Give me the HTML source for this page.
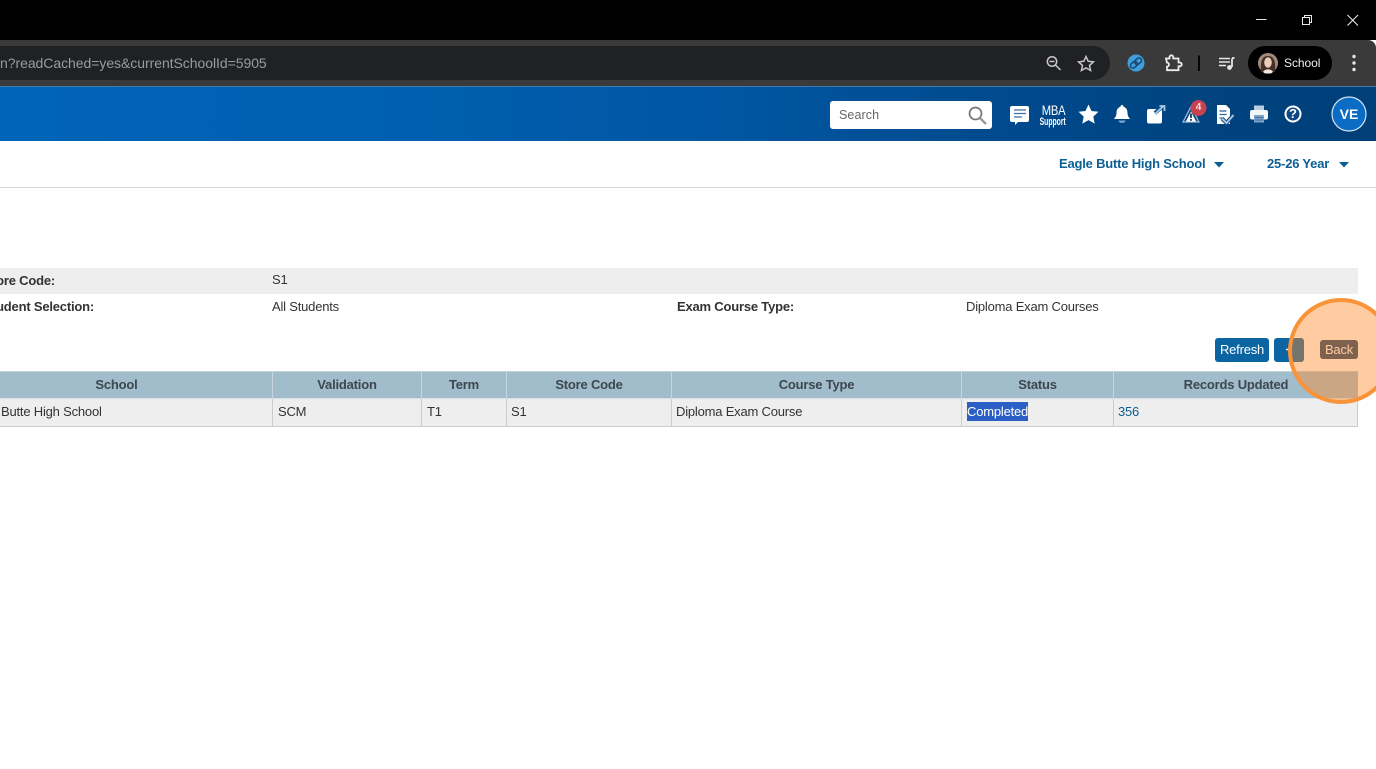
<!DOCTYPE html>
<html lang="en"><head><meta charset="utf-8"><title>Exam Validation</title>
<style>
html,body{margin:0;padding:0;background:#fff}
body{width:1376px;height:769px;position:relative;overflow:hidden;font-family:"Liberation Sans",Arial,sans-serif;font-size:13px;letter-spacing:-.2px;color:#333}
.a{position:absolute;white-space:nowrap}
svg{position:absolute;overflow:visible}
.th{position:absolute;top:372px;height:26px;line-height:25px;text-align:center;font-weight:bold;color:#3c4750;border-right:1px solid #c8d6de;box-sizing:border-box}
.td{position:absolute;top:399px;height:27px;line-height:25px;padding-left:5px;box-sizing:border-box;color:#333;border-right:1px solid #ccc;white-space:nowrap}
</style></head><body>

<div class="a" style="left:0;top:0;width:1376px;height:40px;background:#000"></div>
<div class="a" style="left:0;top:40px;width:1376px;height:46px;background:#3a3a3b;border-top-right-radius:8px"></div>
<div class="a" style="left:0;top:46px;width:1110px;height:34px;background:#202124;border-radius:0 17px 17px 0"></div>
<div class="a" style="left:0;top:54px;font-size:14px;line-height:18px;color:#9a9b9e;letter-spacing:-.05px">n?readCached=yes&amp;currentSchoolId=5905</div>

<!-- window controls -->
<svg style="left:0;top:0" width="1376" height="40" fill="none" stroke="#e8e8e8" stroke-width="1">
<path d="M1256 19.5h10.5"/>
<rect x="1302.5" y="17.5" width="7" height="7"/>
<path d="M1304.5 17.5v-2h7v7h-2"/>
<path d="M1347.5 15l10.5 10.5M1358 15l-10.5 10.5" stroke-width="1.1"/>
</svg>

<!-- toolbar icons -->
<svg style="left:0;top:40px" width="1376" height="46" fill="none" stroke="#c7c7c7">
<circle cx="1052" cy="21.5" r="4.7" stroke-width="1.5"/><path d="M1055.5 25l5 5M1049.5 21.5h5" stroke-width="1.5"/>
<path d="M1086 16.5l2.2 4.8 5.2.6-3.9 3.5 1.1 5.1-4.6-2.6-4.6 2.6 1.100-5.100-3.900-3.500 5.200-.6z" stroke-width="1.5"/>
<circle cx="1136" cy="23" r="8.500" fill="#3f9fdc" stroke="none"/>
<g transform="rotate(-40 1136 23)" stroke="#17476f" stroke-width="1.500"><rect x="1129.500" y="20.500" width="7.500" height="5" rx="2.500"/><rect x="1135" y="20.500" width="7.500" height="5" rx="2.500"/></g>
<path d="M1166 18.500h3.500v-1.300a1.900 1.900 0 0 1 3.800 0v1.300h5.200v4h1.300a1.900 1.900 0 0 1 0 3.800h-1.300v3.900h-11.500v-3.600a2 2 0 0 0 0-4z" stroke="#ececec" stroke-width="1.800"/>
<path d="M1199 15.500v15.500" stroke="#050505" stroke-width="2"/>
<path d="M1219 18.500h11M1219 22h11M1219 25.500h7" stroke="#e6e6e6" stroke-width="1.500"/>
<path d="M1232 18.500v8.500" stroke="#e6e6e6" stroke-width="1.800"/><path d="M1232 18h2.500" stroke="#e6e6e6" stroke-width="1.800"/>
<circle cx="1229.500" cy="27.500" r="2.400" fill="#e6e6e6" stroke="none"/>
<rect x="1248" y="6" width="84" height="34" rx="17" fill="#000" stroke="none"/>
<circle cx="1268" cy="23" r="10" fill="#a08a7b" stroke="none"/>
<path d="M1261 32c-.5-9 0-16 7-16s7.500 7 7 16l-3 0-8 0z" fill="#43302a" stroke="none"/>
<ellipse cx="1268" cy="22.500" rx="3.800" ry="5.200" fill="#edcdb8" stroke="none"/>
<path d="M1263 32c2-3.500 8-3.500 10 0l-2 1.500h-6z" fill="#f3e7de" stroke="none"/>
<circle cx="1354" cy="16.500" r="1.700" fill="#e6e6e6" stroke="none"/><circle cx="1354" cy="23" r="1.700" fill="#e6e6e6" stroke="none"/><circle cx="1354" cy="29.500" r="1.700" fill="#e6e6e6" stroke="none"/>
</svg>
<div class="a" style="left:1284px;top:54px;font-size:12px;letter-spacing:-.05px;line-height:18px;color:#f0f0f0">School</div>

<!-- blue header -->
<div class="a" style="left:0;top:86px;width:1376px;height:55px;background:linear-gradient(90deg,#0064b8 0%,#005fb0 30%,#0055a0 55%,#004a8e 72%,#00437f 88%,#003f78 100%);border-top:1px solid #3f7cab;box-sizing:border-box"></div>
<div class="a" style="left:830px;top:101px;width:162px;height:28px;background:#fff;border-radius:3px"></div>
<div class="a" style="left:839px;top:107px;font-size:12.500px;letter-spacing:.1px;line-height:17px;color:#666">Search</div>
<svg style="left:0;top:0" width="1376" height="141" fill="none">
<circle cx="975.500" cy="113.500" r="6" stroke="#777" stroke-width="1.700"/><path d="M980 118l6 6" stroke="#999" stroke-width="2.400"/>
<path d="M1012 106h15a2 2 0 0 1 2 2v12a2 2 0 0 1-2 2h-9l-3 3v-3h-3a2 2 0 0 1-2-2v-12a2 2 0 0 1 2-2z" fill="#fff"/>
<path d="M1014 110h12M1014 113.500h12M1014 117h8" stroke="#3c6fa6" stroke-width="1.300"/>
<path d="M1088.500 104.500l3 6.500 7 .8-5.200 4.800 1.400 7-6.200-3.500-6.200 3.500 1.400-7-5.200-4.800 7-.8z" fill="#fff"/>
<path d="M1122 105a1.500 1.500 0 0 1 1.500 1.700c3 1 4 3.300 4 6.300 0 3 1.500 4.500 2.500 6h-16c1-1.500 2.500-3 2.500-6 0-3 1-5.300 4-6.300A1.500 1.500 0 0 1 1122 105z" fill="#fff"/>
<path d="M1118.500 120.500h7a3.500 2.500 0 0 1-7 0z" fill="#7da3cc"/>
<rect x="1147" y="109" width="15" height="14.500" rx="2" fill="#fff"/>
<path d="M1155 113l8-7" stroke="#0e4f8f" stroke-width="4"/><path d="M1155 114l8-7.500M1159.500 106h5v5" stroke="#a9c8e4" stroke-width="1.800"/>
<path d="M1191 106.500l8 15.500h-16z" stroke="#9fc0dc" stroke-width="1.200" fill="#0d4783"/>
<path d="M1191 111.500l5.200 10h-10.400z" fill="#fff"/>
<path d="M1191 113.500v4.500M1191 119v1.800" stroke="#0d3f75" stroke-width="1.800"/>
<circle cx="1198.500" cy="108" r="8" fill="#c8414f"/>
<path d="M1217 105h9l4 4v15h-13z" fill="#fff"/>
<path d="M1219.500 111h7M1219.500 114.500h7M1219.500 118h4" stroke="#2c6296" stroke-width="1.300"/>
<path d="M1222 118.500l4.500 4.500 7-8" stroke="#0d4783" stroke-width="4"/>
<path d="M1222 118.500l4.500 4.500 7-8" stroke="#a9c4de" stroke-width="2"/>
<path d="M1254 105.500h10v5h-10z" fill="#b9cde0"/>
<rect x="1250" y="110" width="18" height="9.500" rx="2" fill="#f4f7fa"/>
<rect x="1254" y="115" width="10" height="7.500" fill="#7fa3c7"/>
<path d="M1255 117.500h8M1255 120h8" stroke="#2c6296" stroke-width=".8"/>
<circle cx="1293" cy="114" r="7.500" stroke="#fff" stroke-width="2" fill="#0d4783"/>
<circle cx="1349" cy="114" r="17" fill="#0a6cc4" stroke="#d7e6f3" stroke-width="1.200"/>
</svg>
<div class="a" style="left:1039px;top:103px;width:27px;text-align:center;font-size:14px;line-height:14px;color:#fff;transform:scaleX(.8);letter-spacing:-.2px">MBA</div>
<div class="a" style="left:1032px;top:116px;width:40px;text-align:center;font-size:11px;letter-spacing:0;line-height:12px;font-weight:bold;color:#fff;transform:scaleX(.62)">Support</div>
<div class="a" style="left:1193px;top:102px;width:11px;text-align:center;font-size:10px;letter-spacing:0;line-height:12px;font-weight:bold;color:#f4dfe1">4</div>
<div class="a" style="left:1287px;top:106px;width:12px;text-align:center;font-size:13px;letter-spacing:0;line-height:16px;font-weight:bold;color:#fff">?</div>
<div class="a" style="left:1332px;top:105px;width:34px;text-align:center;font-size:14px;letter-spacing:0;line-height:18px;font-weight:bold;color:#fff">VE</div>

<!-- sub header -->
<div class="a" style="left:0;top:187px;width:1376px;height:1px;background:#d8d8d8"></div>
<div class="a" style="left:1059px;top:155px;font-size:13px;letter-spacing:-.2px;line-height:17px;font-weight:bold;color:#0b5f95">Eagle Butte High School</div>
<div class="a" style="left:1267px;top:155px;font-size:13px;letter-spacing:-.2px;line-height:17px;font-weight:bold;color:#0b5f95">25-26 Year</div>
<svg style="left:0;top:0" width="1376" height="190"><path d="M1214 162h10l-5 5.500zM1339 162h10l-5 5.500z" fill="#0b5f95"/></svg>

<!-- info rows -->
<div class="a" style="left:0;top:268px;width:1358px;height:26px;background:#eee"></div>
<div class="a" style="right:1321px;top:272px;line-height:17px;font-weight:bold;color:#333">Store Code:</div>
<div class="a" style="left:272px;top:271px;line-height:17px">S1</div>
<div class="a" style="right:1282px;top:298px;line-height:17px;font-weight:bold;color:#333">Student Selection:</div>
<div class="a" style="left:272px;top:298px;line-height:17px">All Students</div>
<div class="a" style="left:677px;top:298px;line-height:17px;font-weight:bold">Exam Course Type:</div>
<div class="a" style="left:966px;top:298px;line-height:17px">Diploma Exam Courses</div>

<!-- buttons -->
<div class="a" style="left:1215px;top:338px;width:54px;height:24px;background:#0b65a3;border-radius:3px;color:#fff;text-align:center;line-height:23px">Refresh</div>
<div class="a" style="left:1274px;top:338px;width:30px;height:24px;background:#0b65a3;border-radius:3px;color:#fff;text-align:center;line-height:23px"></div>
<svg style="left:0;top:0" width="1376" height="400"><path d="M1286 349.500h3.500" stroke="#fff" stroke-width="1.500"/></svg>
<div class="a" style="left:1320px;top:340px;width:38px;height:19px;background:#1a406d;border-radius:3px;color:#fff;text-align:center;line-height:19px">Back</div>

<!-- table -->
<div class="a" style="left:0;top:371px;width:1358px;height:56px;background:#eee;border-top:1px solid #c5d2da;border-bottom:1px solid #ccc;box-sizing:border-box"></div>
<div class="a" style="left:0;top:372px;width:1358px;height:26px;background:#a1bccb"></div>
<div class="a" style="left:0;top:398px;width:1358px;height:1px;background:#d8e0e5"></div>
<div class="a" style="left:1357px;top:398px;width:1px;height:29px;background:#ccc"></div>
<div class="th" style="left:-39px;width:312px">School</div>
<div class="th" style="left:273px;width:149px">Validation</div>
<div class="th" style="left:422px;width:85px">Term</div>
<div class="th" style="left:507px;width:165px">Store Code</div>
<div class="th" style="left:672px;width:290px">Course Type</div>
<div class="th" style="left:962px;width:152px">Status</div>
<div class="th" style="left:1114px;width:244px;border-right:0">Records Updated</div>
<div class="td" style="left:-39px;width:312px;padding-left:0"><span style="position:absolute;left:40px">Butte High School</span></div>
<div class="td" style="left:273px;width:149px">SCM</div>
<div class="td" style="left:422px;width:85px">T1</div>
<div class="td" style="left:507px;width:165px;padding-left:4px">S1</div>
<div class="td" style="left:672px;width:290px;padding-left:4px">Diploma Exam Course</div>
<div class="td" style="left:962px;width:152px"><span style="position:absolute;left:5px;top:3px;width:61px;height:19px;line-height:19px;background:#2b5fc7;color:#fff;letter-spacing:-.2px">Completed</span></div>
<div class="td" style="left:1114px;width:243px;border-right:0;padding-left:4px;color:#0b5f95">356</div>

<!-- highlight circle -->
<div class="a" style="left:1288px;top:298px;width:106px;height:106px;box-sizing:border-box;border-radius:50%;background:rgba(255,140,40,.44);border:4px solid #f9933a"></div>
</body></html>
